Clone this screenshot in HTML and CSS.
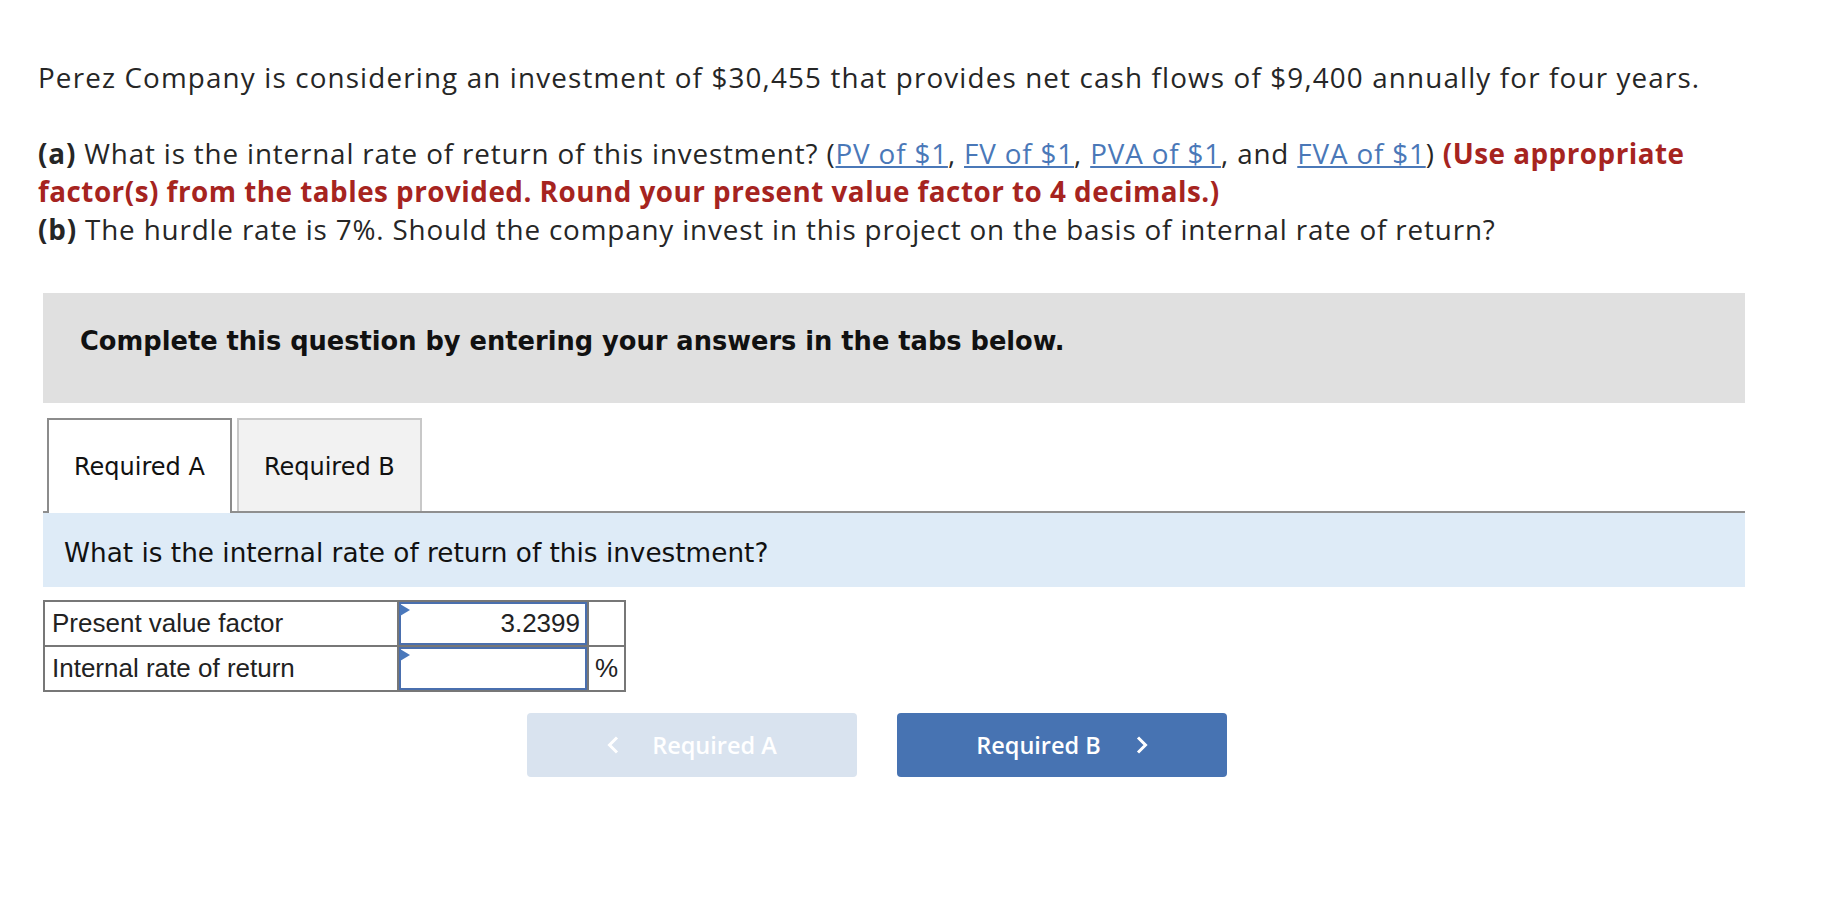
FILE: index.html
```html
<!DOCTYPE html>
<html lang="en">
<head>
<meta charset="utf-8">
<title>Perez Company – Internal rate of return</title>
<link rel="stylesheet" href="styles.css">
</head>
<body>
<main class="page">
  <section class="question">
    <p class="intro">Perez Company is considering an investment of $30,455 that provides net cash flows of $9,400 annually for four years.</p>
    <p class="parts"><b>(a)</b> What is the internal rate of return of this investment? (<a href="#">PV of $1</a>, <a href="#">FV of $1</a>, <a href="#">PVA of $1</a>, and <a href="#">FVA of $1</a>) <strong class="note">(Use appropriate</strong> <strong class="note">factor(s) from the tables provided. Round your present value factor to 4 decimals.)</strong><br><b>(b)</b> The hurdle rate is 7%. Should the company invest in this project on the basis of internal rate of return?</p>
  </section>

  <section class="work">
    <div class="instructions">Complete this question by entering your answers in the tabs below.</div>

    <div class="tabs">
      <div class="tab active">Required A</div>
      <div class="tab">Required B</div>
    </div>

    <div class="prompt">What is the internal rate of return of this investment?</div>

    <div class="answer-grid">
      <div class="label">Present value factor</div>
      <div class="input">3.2399</div>
      <div class="unit"></div>
      <div class="label">Internal rate of return</div>
      <div class="input"></div>
      <div class="unit">%</div>
    </div>

    <div class="nav">
      <button class="nav-btn prev" type="button">
        <svg class="chev" width="12" height="18" viewBox="0 0 12 18"><polyline points="10,1.5 2.5,9 10,16.5" fill="none" stroke="#ffffff" stroke-width="3"/></svg>
        <span>Required A</span>
      </button>
      <button class="nav-btn next" type="button">
        <span>Required B</span>
        <svg class="chev" width="12" height="18" viewBox="0 0 12 18"><polyline points="2,1.5 9.5,9 2,16.5" fill="none" stroke="#ffffff" stroke-width="3"/></svg>
      </button>
    </div>
  </section>
</main>
</body>
</html>
```

FILE: styles.css
```css
html, body {
  margin: 0;
  padding: 0;
  background: #ffffff;
}

.page {
  width: 1822px;
}

/* Question text */
.question {
  padding: 58px 0 0 38px;
  width: 1722px;
  font-family: "Open Sans", "Liberation Sans", sans-serif;
  font-size: 27.8px;
  letter-spacing: 1.15px;
  line-height: 38px;
  color: #262626;
}

.question p {
  margin: 0;
}

.question .parts {
  margin-top: 38px;
  letter-spacing: 0.85px;
}

.question b {
  font-weight: 700;
  color: #262626;
}

.question a {
  color: #4a78b8;
  text-decoration: underline;
  text-underline-offset: 2px;
}

.question .note {
  color: #a6241f;
  font-weight: 700;
  letter-spacing: 0.5px;
}

/* Work area */
.work {
  margin-left: 43px;
  width: 1702px;
}

.instructions {
  margin-top: 45px;
  box-sizing: border-box;
  height: 110px;
  padding: 33px 37px 0;
  background: #e0e0e0;
  font-family: "DejaVu Sans", Verdana, sans-serif;
  font-weight: 700;
  font-size: 25.7px;
  line-height: 30px;
  color: #111111;
}

.tabs {
  margin-top: 15px;
  display: flex;
  gap: 5px;
  padding-left: 4px;
  border-bottom: 2px solid #8f8f8f;
  height: 93px;
  align-items: flex-start;
}

.tab {
  box-sizing: border-box;
  height: 93px;
  display: flex;
  align-items: center;
  padding: 2px 25px 0;
  border: 2px solid #c8c8c8;
  border-bottom: none;
  background: #f2f2f2;
  font-family: "DejaVu Sans", Verdana, sans-serif;
  font-size: 24px;
  color: #111111;
}

.tab.active {
  height: 95px;
  padding-bottom: 2px;
  border-color: #8c8c8c;
  background: #ffffff;
  position: relative;
  z-index: 1;
}

.prompt {
  box-sizing: border-box;
  height: 74px;
  display: flex;
  align-items: center;
  padding: 6px 0 0 21px;
  background: #deebf7;
  font-family: "DejaVu Sans", Verdana, sans-serif;
  font-size: 26.3px;
  color: #111111;
}

/* Answer table */
.answer-grid {
  margin-top: 13px;
  display: grid;
  grid-template-columns: 352px 188px 35px;
  grid-auto-rows: 43px;
  gap: 2px;
  padding: 2px;
  width: max-content;
  background: #777777;
  font-family: "Liberation Sans", Arial, sans-serif;
  font-size: 26px;
  color: #222222;
}

.label {
  background: #ffffff;
  display: flex;
  align-items: center;
  padding-left: 7px;
}

.input {
  position: relative;
  box-sizing: border-box;
  background: #ffffff;
  border: 2px solid #4a6fae;
  display: flex;
  align-items: center;
  justify-content: flex-end;
  padding-right: 5px;
}

.input::before {
  content: "";
  position: absolute;
  left: -1px;
  top: 0;
  width: 0;
  height: 0;
  border-left: 10px solid #4a78bb;
  border-top: 6px solid transparent;
  border-bottom: 6px solid transparent;
}

.unit {
  background: #ffffff;
  display: flex;
  align-items: center;
  justify-content: center;
}

/* Navigation buttons */
.nav {
  margin-top: 21px;
  margin-left: 484px;
  display: flex;
  gap: 40px;
}

.nav-btn {
  width: 330px;
  height: 64px;
  border: none;
  border-radius: 4px;
  display: flex;
  align-items: center;
  justify-content: center;
  gap: 33px;
  padding: 0;
  font-family: "Open Sans", "Liberation Sans", sans-serif;
  font-weight: 600;
  font-size: 23.5px;
  color: #ffffff;
}

.nav-btn.prev {
  background: #d9e3ef;
}

.nav-btn.next {
  background: #4773b2;
  gap: 35px;
}

.chev {
  display: block;
}
```
